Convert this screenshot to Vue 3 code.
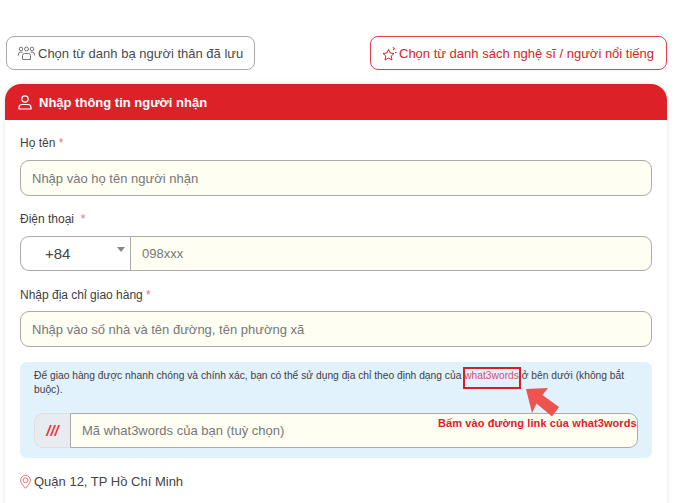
<script setup>
const labels = {
  name: 'Họ tên',
  phone: 'Điện thoại',
  address: 'Nhập địa chỉ giao hàng',
}
</script>

<template>
  <div class="page">
    <div class="choices">
      <button class="choice">
        <svg class="ico" width="17" height="15" viewBox="0 0 17 15" fill="none" stroke="#777" stroke-width="1">
          <circle cx="3" cy="3" r="1.800" />
          <circle cx="8.500" cy="3" r="2" />
          <circle cx="14" cy="3" r="1.800" />
          <path d="M.5 9.500V8q0-1.800 2-1.800h2M16.500 9.500V8q0-1.800-2-1.800h-2" />
          <path d="M4.500 13.500V9.500q0-2 2-2h4q2 0 2 2v4z" />
        </svg>
        <span>Chọn từ danh bạ người thân đã lưu</span>
      </button>
      <button class="choice red">
        <svg class="ico" width="15" height="15" viewBox="0 0 15 15" fill="none" stroke="#dc2129" stroke-width="1">
          <path d="M6.500 3.500 8.200 7l3.800.5-2.800 2.600.8 3.900-3.500-2-3.500 2 .8-3.900L1 7.500 4.800 7z" />
          <path d="M11 1.200l.6.8.9.2-.7.7.1 1-.9-.4" />
          <path d="M13 6.500h1.500" />
        </svg>
        <span>Chọn từ danh sách nghệ sĩ / người nổi tiếng</span>
      </button>
    </div>

    <section class="card">
      <header class="card-head">
        <svg width="14" height="15" viewBox="0 0 14 15" fill="none" stroke="#fff" stroke-width="1.200">
          <circle cx="7" cy="4" r="3.200" />
          <path d="M1 14v-1.500Q1 9.500 4 9.500h6q3 0 3 3V14z" />
        </svg>
        <span>Nhập thông tin người nhận</span>
      </header>

      <div class="card-body">
        <div class="field name">
          <label>{{ labels.name }} <i>*</i></label>
          <input placeholder="Nhập vào họ tên người nhận" />
        </div>

        <div class="field phone">
          <label>{{ labels.phone }} &nbsp;<i>*</i></label>
          <div class="phone-row">
            <div class="code">+84<b></b></div>
            <input placeholder="098xxx" />
          </div>
        </div>

        <div class="field address">
          <label>{{ labels.address }}<i> *</i></label>
          <input placeholder="Nhập vào số nhà và tên đường, tên phường xã" />
        </div>

        <div class="w3w">
          <p>
            Để giao hàng được nhanh chóng và chính xác, bạn có thể sử dụng địa chỉ theo định dạng của
            <a>what3words</a> ở bên dưới (không bắt buộc).
          </p>
          <div class="w3w-row">
            <span class="slashes">///</span>
            <input placeholder="Mã what3words của bạn (tuỳ chọn)" />
          </div>
          <span class="mark"></span>
          <svg class="arrow" width="36" height="32" viewBox="0 0 36 32">
            <path d="M0 1 22 0 16.500 7 33 19 26 28.500 10.500 15.500 6 25z" fill="#ef5350" />
          </svg>
          <strong class="hint">Bấm vào đường link của what3words</strong>
        </div>

        <div class="place">
          <svg width="11" height="14" viewBox="0 0 11 14" fill="none" stroke="#e57373" stroke-width="1">
            <path d="M5.500 13.300C3 10.500.6 7.800.6 5.300a4.900 4.900 0 0 1 9.800 0c0 2.500-2.400 5.200-4.900 8z" />
            <circle cx="5.500" cy="5.200" r="2.400" />
          </svg>
          <span>Quận 12, TP Hồ Chí Minh</span>
        </div>
      </div>
    </section>
  </div>
</template>

<style scoped>
.page {
  width: 676px;
  height: 503px;
  box-sizing: border-box;
  padding: 36px 9px 0 5px;
  overflow: hidden;
  background: #fff;
  font-family: "Liberation Sans", Arial, sans-serif;
  color: #333;
}
.choices {
  display: flex;
  justify-content: space-between;
  padding-left: 1px;
}
.choice {
  display: flex;
  align-items: center;
  gap: 3px;
  width: 249px;
  height: 34px;
  padding: 0 0 0 11px;
  box-sizing: border-box;
  border: 1px solid #a9a9a9;
  border-radius: 8px;
  background: #fff;
  font: 13px "Liberation Sans", Arial, sans-serif;
  color: #4a4a4a;
}
.choice.red {
  width: 297px;
  gap: 2px;
  color: #dc2129;
  border-color: #e04048;
}
.card {
  margin-top: 14px;
  border-radius: 16px 16px 0 0;
  box-shadow: 0 0 6px rgba(0, 0, 0, .1);
}
.card-head {
  display: flex;
  align-items: center;
  gap: 7px;
  height: 36px;
  padding-left: 13px;
  border-radius: 16px 16px 0 0;
  background: #dc2129;
  color: #fff;
  font-size: 13px;
  font-weight: 700;
}
.card-body {
  padding: 15px 15px 0;
  height: 400px;
  background: #fff;
}
.field label {
  display: block;
  height: 17px;
  margin-bottom: 8px;
  font-size: 12px;
  line-height: 17px;
  color: #3d3d3d;
}
.field i {
  font-style: normal;
  color: #e57373;
}
.field input, .w3w-row input {
  display: block;
  width: 100%;
  height: 36px;
  box-sizing: border-box;
  padding: 0 11px;
  border: 1px solid #aaa;
  border-radius: 9px;
  background: #fffef2;
  font: 13px "Liberation Sans", Arial, sans-serif;
  outline: none;
}
input::placeholder {
  color: #777;
  opacity: 1;
}
.field.phone {
  margin-top: 15px;
}
.field.address {
  margin-top: 16px;
}
.field.address label {
  margin-bottom: 7px;
}
.phone-row {
  display: flex;
  height: 35px;
}
.code {
  position: relative;
  flex: 0 0 110px;
  box-sizing: border-box;
  padding: 8px 0 0 24px;
  border: 1px solid #aaa;
  border-right: 0;
  border-radius: 9px 0 0 9px;
  font-size: 15px;
  color: #444;
}
.code b {
  position: absolute;
  top: 10px;
  right: 5px;
  border: 4px solid transparent;
  border-top: 5px solid #888;
}
.field.phone input {
  height: 35px;
  border-radius: 0 9px 9px 0;
  padding-left: 11px;
}
.w3w {
  position: relative;
  margin-top: 15px;
  height: 96px;
  box-sizing: border-box;
  padding: 7px 14px 0;
  border-radius: 7px;
  background: #e2f2fd;
}
.w3w p {
  margin: 0;
  font-size: 10.250px;
  line-height: 14px;
  color: #3d3d3d;
}
.w3w a {
  color: #dc4a6a;
}
.w3w-row {
  display: flex;
  height: 35px;
  margin-top: 16px;
}
.slashes {
  flex: 0 0 36px;
  box-sizing: border-box;
  border: 1px solid #dcdfe3;
  border-right: 0;
  border-radius: 9px 0 0 9px;
  background: #e8ebef;
  text-align: center;
  line-height: 33px;
  font-size: 15px;
  font-weight: 700;
  font-style: italic;
  color: #e8393f;
}
.w3w-row input {
  height: 35px;
  border-radius: 0 9px 9px 0;
  padding-left: 11px;
}
.mark {
  position: absolute;
  left: 443px;
  top: 5px;
  width: 58px;
  height: 22px;
  box-sizing: border-box;
  border: 2px solid #d81e28;
}
.arrow {
  position: absolute;
  left: 506px;
  top: 26px;
}
.hint {
  position: absolute;
  left: 418px;
  top: 55px;
  font-size: 11px;
  color: #dc2129;
  letter-spacing: .1px;
}
.place {
  display: flex;
  align-items: center;
  gap: 3px;
  margin-top: 16px;
  font-size: 13px;
  color: #444;
}
</style>
